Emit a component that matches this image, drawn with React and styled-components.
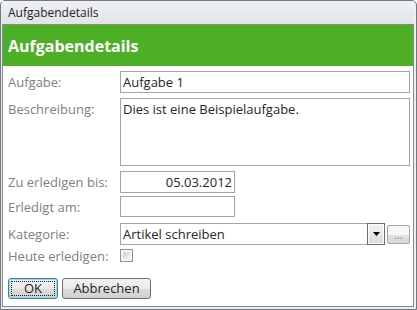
import React from 'react';
import styled, { createGlobalStyle } from 'styled-components';

const GlobalStyle = createGlobalStyle`
  html, body {
    margin: 0;
    padding: 0;
    background: #fff;
  }
  body {
    font-family: "Open Sans", "Noto Sans", sans-serif;
  }
`;

const Window = styled.div`
  box-sizing: border-box;
  width: 417px;
  height: 310px;
  border: 1px solid #6f7984;
  border-radius: 5px 5px 0 0;
  background: #eceef1;
  padding: 0 2px 2px 1px;
  display: flex;
  flex-direction: column;
`;

const TitleBar = styled.div`
  height: 23px;
  display: flex;
  align-items: center;
  padding-left: 6px;
  font-size: 12px;
  color: #1e1e1e;
  background: linear-gradient(#eff0f3, #e3e4e8);
`;

const Frame = styled.div`
  flex: 1;
  border: 1px solid #8a8a8a;
  background: #fff;
  display: flex;
  flex-direction: column;
`;

const Header = styled.div`
  height: 41px;
  background: #4caf25;
  color: #fff;
  font-size: 16px;
  font-weight: 700;
  display: flex;
  align-items: center;
  padding-left: 5px;
`;

const Form = styled.div`
  padding: 5px 3px 0 5px;
  display: flex;
  flex-direction: column;
`;

const Row = styled.div`
  display: flex;
  align-items: ${p => (p.$top ? 'flex-start' : 'center')};
  height: ${p => p.$h}px;
  margin-top: ${p => p.$mt || 0}px;
`;

const Label = styled.div`
  width: 112px;
  flex: none;
  font-size: 13px;
  color: #808080;
  white-space: nowrap;
  padding-top: ${p => (p.$top ? 2 : 0)}px;
`;

const fieldBase = `
  box-sizing: border-box;
  border: 1px solid #a5a5a5;
  font-family: "Open Sans", "Noto Sans", sans-serif;
  font-size: 13px;
  color: #262626;
  outline: none;
  margin: 0;
  background: #fff;
`;

const TextField = styled.input`
  ${fieldBase}
  width: ${p => p.$w}px;
  height: 100%;
  padding: 0 2px;
  text-align: ${p => (p.$right ? 'right' : 'left')};
`;

const TextArea = styled.textarea`
  ${fieldBase}
  width: 290px;
  height: 100%;
  padding: 1px 2px;
  resize: none;
`;

const ComboWrap = styled.div`
  display: flex;
  align-items: center;
  gap: 2px;
  height: 100%;
`;

const Combo = styled.div`
  box-sizing: border-box;
  width: 265px;
  height: 100%;
  border: 1px solid #a5a5a5;
  display: flex;
  font-size: 13px;
  color: #262626;
`;

const ComboText = styled.div`
  flex: 1;
  padding-left: 2px;
  display: flex;
  align-items: center;
`;

const DropButton = styled.div`
  box-sizing: border-box;
  width: 18px;
  margin: -1px -1px -1px 0;
  border: 1px solid #6c6c6c;
  box-shadow: inset 0 0 0 1px #fff;
  background: linear-gradient(#f4f4f4, #dadada);
  display: flex;
  align-items: center;
  justify-content: center;
`;

const MoreButton = styled.div`
  box-sizing: border-box;
  width: 23px;
  height: 19px;
  border: 1px solid #a3a3a3;
  border-radius: 2px;
  background: linear-gradient(#f7f7f7 50%, #e2e2e2 50%, #d8d8d8);
  color: #b3763c;
  font-size: 11px;
  line-height: 11px;
  display: flex;
  align-items: flex-end;
  justify-content: center;
  padding-bottom: 3px;
`;

const CheckBox = styled.div`
  box-sizing: border-box;
  width: 13px;
  height: 13px;
  border: 1px solid #8e8f8f;
  padding: 2px;
  background: #f4f4f4;
  &::after {
    content: '';
    display: block;
    width: 100%;
    height: 100%;
    background: linear-gradient(135deg, #cbcfd5, #f6f6f6);
  }
`;

const Buttons = styled.div`
  display: flex;
  gap: 4px;
  margin-top: 16px;
  padding-left: 5px;
`;

const Button = styled.button`
  box-sizing: border-box;
  width: ${p => p.$w}px;
  height: 21px;
  margin: 0;
  padding: 0;
  border: 1px solid ${p => (p.$default ? '#3c7fb1' : '#707070')};
  border-radius: 3px;
  background: linear-gradient(#f2f2f2 0%, #ebebeb 50%, #dddddd 50%, #cfcfcf 100%);
  font-family: "Open Sans", "Noto Sans", sans-serif;
  font-size: 13px;
  line-height: 17px;
  color: #1e1e1e;
  position: relative;
  ${p =>
    p.$default &&
    `
    box-shadow: inset 0 0 0 1px #9fd4f0;
    &::after {
      content: '';
      position: absolute;
      inset: 2px;
      border: 1px dotted #202020;
    }
  `}
`;

export default function App() {
  return (
    <>
      <GlobalStyle />
      <Window>
        <TitleBar>Aufgabendetails</TitleBar>
        <Frame>
          <Header>Aufgabendetails</Header>
          <Form>
            <Row $h={22}>
              <Label>Aufgabe:</Label>
              <TextField $w={290} readOnly value="Aufgabe 1" />
            </Row>
            <Row $h={68} $mt={5} $top>
              <Label $top>Beschreibung:</Label>
              <TextArea readOnly value="Dies ist eine Beispielaufgabe." />
            </Row>
            <Row $h={22} $mt={5}>
              <Label>Zu erledigen bis:</Label>
              <TextField $w={115} $right readOnly value="05.03.2012" />
            </Row>
            <Row $h={21} $mt={3}>
              <Label>Erledigt am:</Label>
              <TextField $w={115} readOnly value="" />
            </Row>
            <Row $h={22} $mt={6}>
              <Label>Kategorie:</Label>
              <ComboWrap>
                <Combo>
                  <ComboText>Artikel schreiben</ComboText>
                  <DropButton>
                    <svg width="7" height="4" viewBox="0 0 7 4">
                      <path d="M0 0h7L3.5 4z" fill="#000" />
                    </svg>
                  </DropButton>
                </Combo>
                <MoreButton>...</MoreButton>
              </ComboWrap>
            </Row>
            <Row $h={13} $mt={4}>
              <Label>Heute erledigen:</Label>
              <CheckBox />
            </Row>
          </Form>
          <Buttons>
            <Button $w={50} $default>OK</Button>
            <Button $w={89}>Abbrechen</Button>
          </Buttons>
        </Frame>
      </Window>
    </>
  );
}
